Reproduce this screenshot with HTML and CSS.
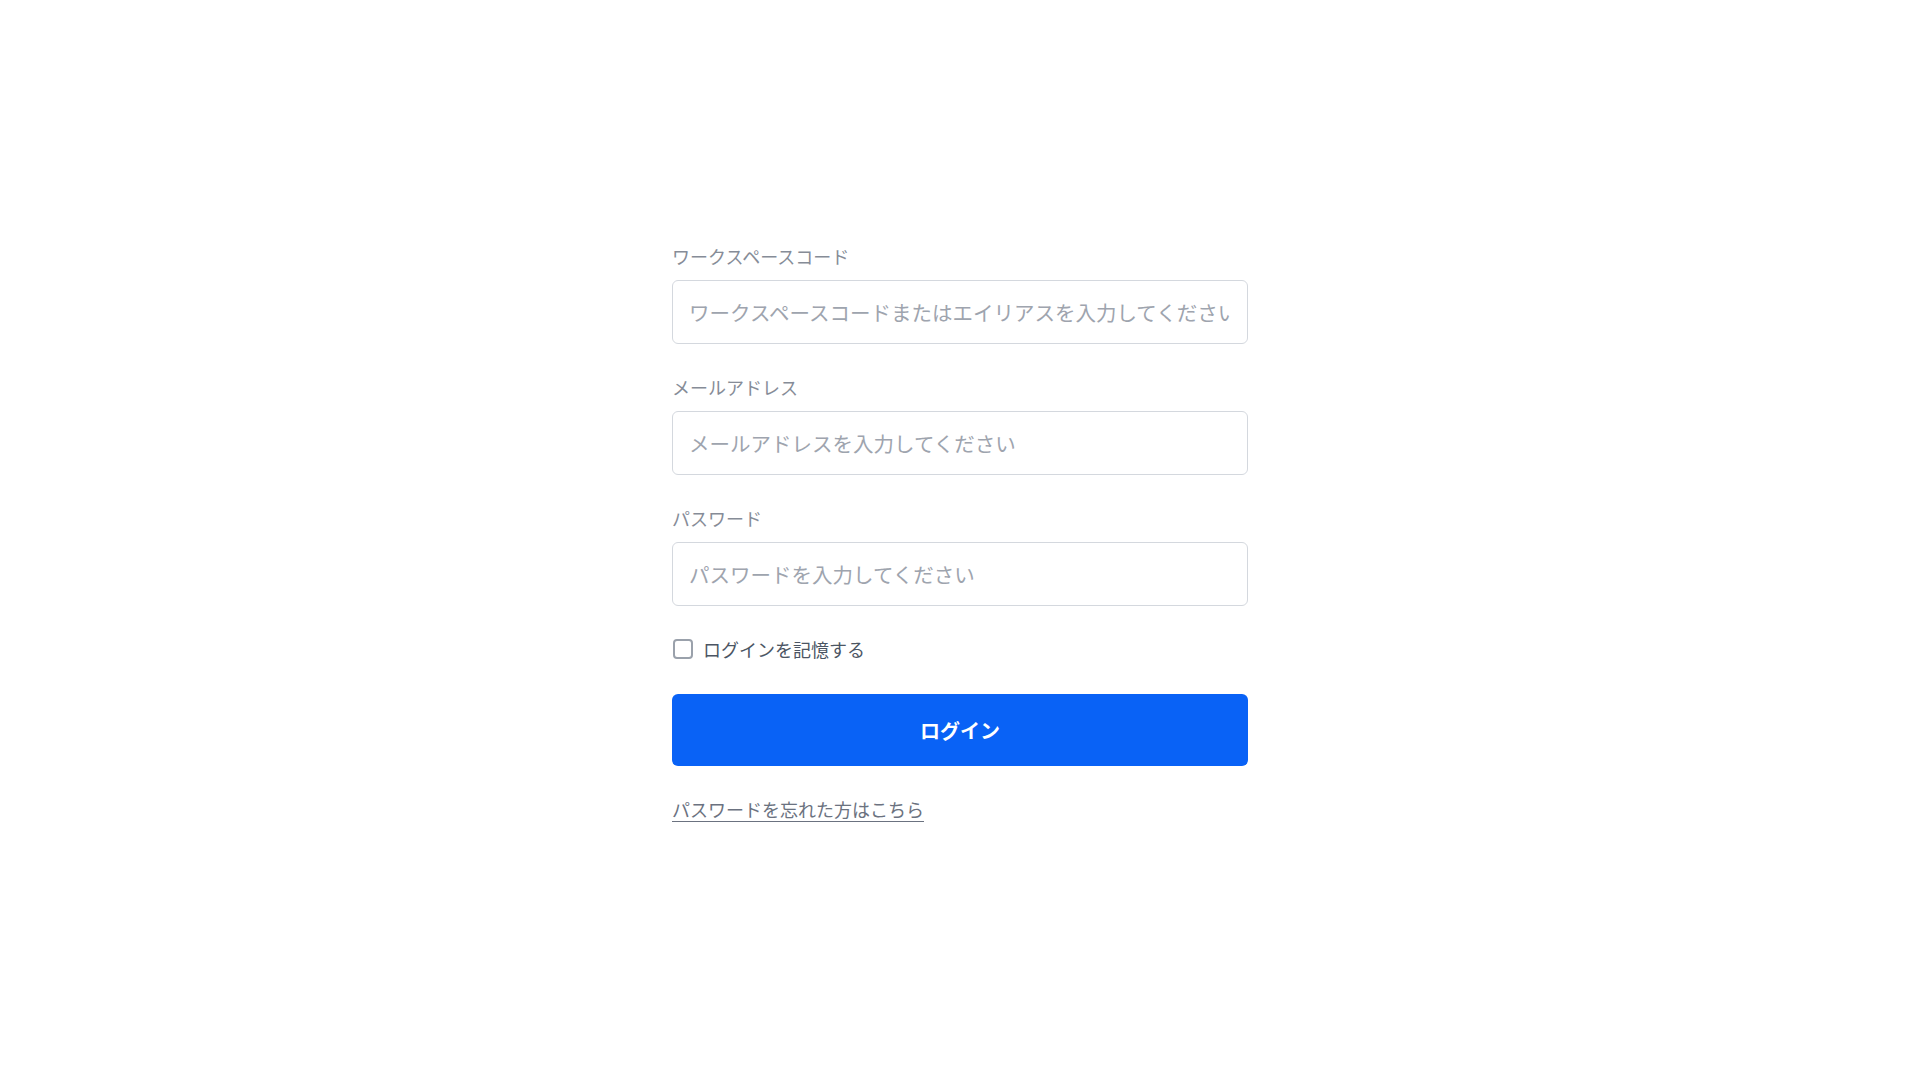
FILE: index.html
```html
<!DOCTYPE html>
<html lang="ja">
<head>
  <meta charset="UTF-8">
  <title>ログイン</title>
  <link rel="stylesheet" href="styles.css">
</head>
<body>

<form class="login" onsubmit="return false">
  <div class="field">
    <label for="workspace">ワークスペースコード</label>
    <input id="workspace" type="text" placeholder="ワークスペースコードまたはエイリアスを入力してください">
  </div>

  <div class="field">
    <label for="email">メールアドレス</label>
    <input id="email" type="email" placeholder="メールアドレスを入力してください">
  </div>

  <div class="field">
    <label for="password">パスワード</label>
    <input id="password" type="password" placeholder="パスワードを入力してください">
  </div>

  <label class="remember">
    <input type="checkbox">
    <span>ログインを記憶する</span>
  </label>

  <button type="submit">ログイン</button>

  <a class="forgot" href="#">パスワードを忘れた方はこちら</a>
</form>

</body>
</html>
```

FILE: styles.css
```css
body { margin: 0; background: #fff; font-family: "Noto Sans CJK JP", "Noto Sans", sans-serif; }
.login { max-width: 576px; margin: 0 auto; padding-top: 243px; display: flex; flex-direction: column; gap: 30px; }
.field { display: flex; flex-direction: column; gap: 11px; }
.field label { font-size: 18px; line-height: 26px; color: #868c97; }
.field input { box-sizing: border-box; height: 64px; width: 100%; padding: 0 16px; font-size: 20.5px; font-family: inherit; color: #374151; border: 1px solid #d4d8de; border-radius: 6px; outline: none; }
.field input::placeholder { color: #9ea4ae; }
.remember { display: flex; align-items: center; gap: 10px; margin-bottom: 2px; font-size: 18px; line-height: 26px; color: #4b5563; }
.remember input { appearance: none; margin: 0 0 0 1px; width: 20px; height: 20px; border: 2px solid #9aa1ab; border-radius: 4px; box-sizing: border-box; }
button { height: 72px; border: none; border-radius: 6px; background: #0962f6; color: #fff; font-family: inherit; font-size: 20px; font-weight: bold; cursor: pointer; }
.forgot { align-self: flex-start; font-size: 18px; line-height: 26px; color: #6b7280; text-decoration: underline; text-underline-offset: 4px; }
```
